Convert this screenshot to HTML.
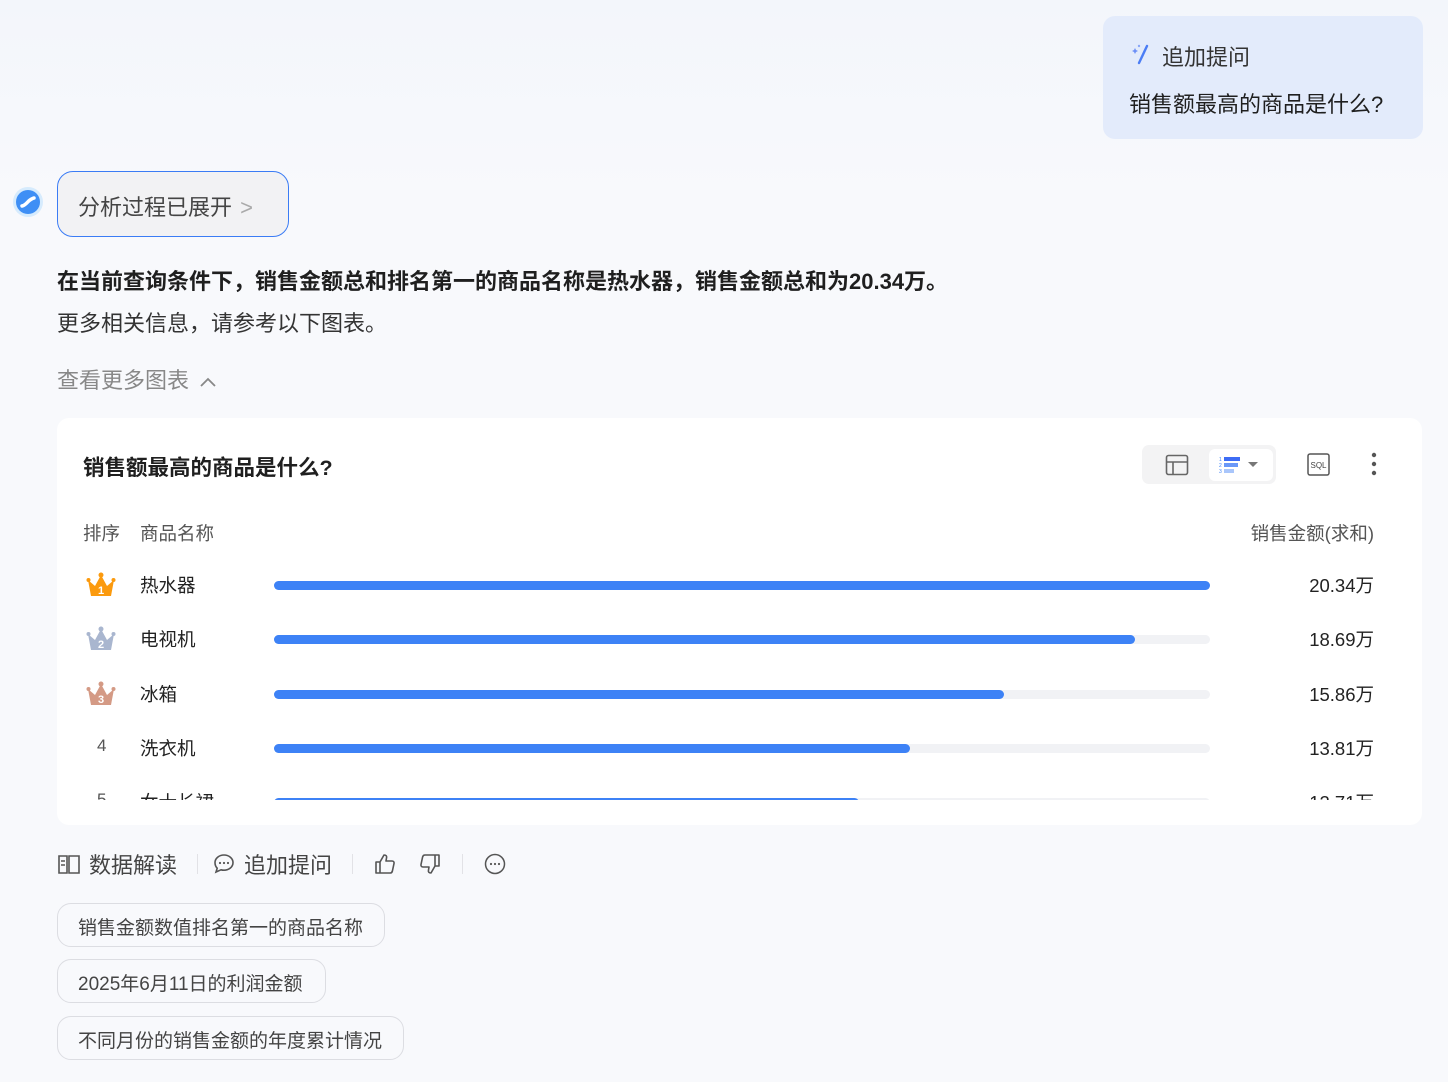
<!DOCTYPE html>
<html><head><meta charset="utf-8"><style>
*{margin:0;padding:0;box-sizing:border-box}
body{width:1448px;height:1082px;overflow:hidden;background:#f8f9fc;font-family:"Liberation Sans","Noto Sans CJK SC",sans-serif;color:#1f1f1f;position:relative}
.topbg{position:absolute;left:0;top:0;width:1448px;height:200px;background:linear-gradient(180deg,#f3f6fb 0%,#f8f9fc 100%)}
.abs{position:absolute}
.q{left:1103px;top:16px;width:320px;height:123px;background:#e3ebfb;border-radius:12px}
.q .t1{position:absolute;left:59px;top:24px;font-size:22px;color:#333}
.q .t2{position:absolute;left:26px;top:71px;font-size:22px;color:#1f1f1f}
.btn{left:57px;top:171px;width:232px;height:66px;border:1.5px solid #3b7cf5;border-radius:16px;background:#f2f2f4;font-size:22px;color:#444;padding:18px 0 0 20px}
.card{left:57px;top:418px;width:1365px;height:407px;background:#fff;border-radius:12px;overflow:hidden}
.rows{position:absolute;left:0;top:0;width:1365px;height:382px;overflow:hidden}
.row{position:absolute;left:0;width:1365px;height:30px}
.bar{position:absolute;left:217px;top:11px;width:936px;height:9px;border-radius:5px;background:#f1f2f5}
.bar i{display:block;height:9px;border-radius:5px;background:#3d82f6}
.nm{position:absolute;left:83px;top:2px;font-size:18.5px;color:#222}
.val{position:absolute;right:48px;top:2px;font-size:18.5px;color:#222}
.chip{position:absolute;left:57px;height:44px;border:1px solid #dcdde2;border-radius:14px;font-size:19px;color:#444;padding:9px 0 0 20px;background:#f8f9fc}
</style></head><body>
<div class="topbg"></div>
<div class="abs q">
<svg class="abs" style="left:27px;top:27px" width="22" height="22" viewBox="0 0 22 22"><path d="M17 3L9 20" stroke="#4b7df5" stroke-width="2.4" stroke-linecap="round"/><path d="M5 5l1 2 2 1-2 1-1 2-1-2-2-1 2-1z" fill="#6c8ff7"/><circle cx="9" cy="3" r="1.2" fill="#8aa6f8"/></svg>
<div class="t1">追加提问</div><div class="t2">销售额最高的商品是什么?</div></div>
<svg class="abs" style="left:12px;top:186px" width="32" height="32" viewBox="0 0 32 32"><circle cx="16" cy="16" r="15" fill="#d6ebfd"/><circle cx="16" cy="16" r="12" fill="#3f8ff5"/><path d="M10 20c4-1 5-4 8-6s4-2 4-2" stroke="#fff" stroke-width="3.5" fill="none" stroke-linecap="round"/></svg>
<div class="abs btn">分析过程已展开 <span style="color:#aaa;margin-left:2px">&gt;</span></div>
<div class="abs" style="left:57px;top:264px;font-size:22px;font-weight:bold;color:#1f1f1f">在当前查询条件下，销售金额总和排名第一的商品名称是热水器，销售金额总和为20.34万。</div>
<div class="abs" style="left:57px;top:306px;font-size:22px;color:#333">更多相关信息，请参考以下图表。</div>
<div class="abs" style="left:57px;top:363px;font-size:22px;color:#888">查看更多图表 <svg width="18" height="12" viewBox="0 0 18 12" style="margin-left:4px"><path d="M2 10l7-7 7 7" stroke="#888" stroke-width="1.8" fill="none"/></svg></div>
<div class="abs card">
<div class="abs" style="left:26px;top:33px;font-size:21.5px;font-weight:bold;color:#1f1f1f">销售额最高的商品是什么?</div>
<div class="abs" style="left:1085px;top:27px;width:134px;height:39px;background:#f3f3f4;border-radius:7px"></div>
<svg class="abs" style="left:1108px;top:36px" width="24" height="22" viewBox="0 0 24 22"><rect x="1.5" y="1.5" width="21" height="19" rx="2" stroke="#666" stroke-width="1.6" fill="none"/><path d="M1.5 8h21M8 8v12" stroke="#666" stroke-width="1.6"/></svg>
<div class="abs" style="left:1152px;top:31px;width:64px;height:32px;background:#fff;border-radius:6px"></div>
<svg class="abs" style="left:1162px;top:37px" width="50" height="20" viewBox="0 0 50 20"><text x="0" y="6" font-size="5" fill="#3d82f6">1</text><text x="0" y="12" font-size="5" fill="#3d82f6">2</text><text x="0" y="18" font-size="5" fill="#3d82f6">3</text><rect x="5" y="2" width="16" height="4" fill="#3d6cf5"/><rect x="5" y="8" width="14" height="4" fill="#6a98f8"/><rect x="5" y="14" width="10" height="4" fill="#a9c6fb"/><path d="M29 7h10l-5 5z" fill="#777"/></svg>
<svg class="abs" style="left:1250px;top:35px" width="24" height="24" viewBox="0 0 24 24"><rect x="1" y="1" width="21" height="21" rx="2" stroke="#555" stroke-width="1.5" fill="none"/><text x="11.5" y="15" font-size="8" text-anchor="middle" fill="#444" font-family="Liberation Sans">SQL</text></svg>
<svg class="abs" style="left:1312px;top:34px" width="10" height="26"><circle cx="5" cy="3" r="2.2" fill="#555"/><circle cx="5" cy="12" r="2.2" fill="#555"/><circle cx="5" cy="21" r="2.2" fill="#555"/></svg>
<div class="abs" style="left:26px;top:102px;font-size:18.5px;color:#555">排序</div>
<div class="abs" style="left:83px;top:102px;font-size:18.5px;color:#555">商品名称</div>
<div class="abs" style="right:48px;top:102px;font-size:18.5px;color:#555">销售金额(求和)</div>
<div class="rows">
<div class="row" style="top:152px"><svg class="abs" style="left:29px;top:2px" width="30" height="26" viewBox="0 0 30 26"><path d="M2 8l7 6 6-11 6 11 7-6-3 16H5z" fill="#fb9a0e"/><circle cx="15" cy="3" r="2.5" fill="#fb9a0e"/><circle cx="2.5" cy="8" r="2" fill="#fb9a0e"/><circle cx="27.5" cy="8" r="2" fill="#fb9a0e"/><text x="15" y="22" font-size="11" font-weight="bold" text-anchor="middle" fill="#fff" font-family="Liberation Sans">1</text></svg><span class="nm">热水器</span><div class="bar"><i style="width:936px"></i></div><span class="val">20.34万</span></div>
<div class="row" style="top:206px"><svg class="abs" style="left:29px;top:2px" width="30" height="26" viewBox="0 0 30 26"><path d="M2 8l7 6 6-11 6 11 7-6-3 16H5z" fill="#a9b6cf"/><circle cx="15" cy="3" r="2.5" fill="#a9b6cf"/><circle cx="2.5" cy="8" r="2" fill="#a9b6cf"/><circle cx="27.5" cy="8" r="2" fill="#a9b6cf"/><text x="15" y="22" font-size="11" font-weight="bold" text-anchor="middle" fill="#fff" font-family="Liberation Sans">2</text></svg><span class="nm">电视机</span><div class="bar"><i style="width:861px"></i></div><span class="val">18.69万</span></div>
<div class="row" style="top:261px"><svg class="abs" style="left:29px;top:2px" width="30" height="26" viewBox="0 0 30 26"><path d="M2 8l7 6 6-11 6 11 7-6-3 16H5z" fill="#d49a85"/><circle cx="15" cy="3" r="2.5" fill="#d49a85"/><circle cx="2.5" cy="8" r="2" fill="#d49a85"/><circle cx="27.5" cy="8" r="2" fill="#d49a85"/><text x="15" y="22" font-size="11" font-weight="bold" text-anchor="middle" fill="#fff" font-family="Liberation Sans">3</text></svg><span class="nm">冰箱</span><div class="bar"><i style="width:730px"></i></div><span class="val">15.86万</span></div>
<div class="row" style="top:315px"><span class="abs" style="left:40px;top:3px;font-size:17px;color:#555">4</span><span class="nm">洗衣机</span><div class="bar"><i style="width:636px"></i></div><span class="val">13.81万</span></div>
<div class="row" style="top:369px"><span class="abs" style="left:40px;top:3px;font-size:17px;color:#555">5</span><span class="nm">女士长裙</span><div class="bar"><i style="width:585px"></i></div><span class="val">12.71万</span></div>
</div>
</div>
<div class="abs" style="left:57px;top:850px;font-size:22px;color:#444;display:flex;align-items:center;height:28px">
<svg width="24" height="22" viewBox="0 0 24 22"><path d="M2 3h8v17H2zM12 3h10v17H12z" stroke="#555" stroke-width="1.6" fill="none"/><path d="M4 8h4M4 12h4" stroke="#555" stroke-width="1.4"/></svg><span style="margin-left:8px">数据解读</span>
<span style="width:1px;height:20px;background:#e2e2e6;margin:0 14px 0 20px"></span>
<svg width="24" height="24" viewBox="0 0 24 24"><path d="M12 3c5 0 9 3.4 9 7.6s-4 7.6-9 7.6c-1 0-2-.1-3-.4L4 20l1.2-3.8C3.8 14.8 3 12.8 3 10.6 3 6.4 7 3 12 3z" stroke="#555" stroke-width="1.6" fill="none"/><circle cx="8" cy="11" r="1.1" fill="#555"/><circle cx="12" cy="11" r="1.1" fill="#555"/><circle cx="16" cy="11" r="1.1" fill="#555"/></svg><span style="margin-left:8px">追加提问</span>
<span style="width:1px;height:20px;background:#e2e2e6;margin:0 20px"></span>
<svg width="24" height="24" viewBox="0 0 24 24"><path d="M3 10h4v11H3zM7 10l4-7c2 0 3 1 2.5 3L13 9h6c1.5 0 2.3 1 2 2.5l-1.6 7.5c-.3 1.2-1 2-2.3 2H7" stroke="#555" stroke-width="1.6" fill="none" stroke-linejoin="round"/></svg>
<svg style="margin-left:21px" width="24" height="24" viewBox="0 0 24 24"><g transform="rotate(180 12 12)"><path d="M3 10h4v11H3zM7 10l4-7c2 0 3 1 2.5 3L13 9h6c1.5 0 2.3 1 2 2.5l-1.6 7.5c-.3 1.2-1 2-2.3 2H7" stroke="#555" stroke-width="1.6" fill="none" stroke-linejoin="round"/></g></svg>
<span style="width:1px;height:20px;background:#e2e2e6;margin:0 20px"></span>
<svg width="24" height="24" viewBox="0 0 24 24"><circle cx="12" cy="12" r="9.5" stroke="#555" stroke-width="1.5" fill="none"/><circle cx="8" cy="12" r="1.1" fill="#555"/><circle cx="12" cy="12" r="1.1" fill="#555"/><circle cx="16" cy="12" r="1.1" fill="#555"/></svg>
</div>
<div class="chip" style="top:903px;width:328px">销售金额数值排名第一的商品名称</div>
<div class="chip" style="top:959px;width:269px">2025年6月11日的利润金额</div>
<div class="chip" style="top:1016px;width:347px">不同月份的销售金额的年度累计情况</div>
</body></html>
